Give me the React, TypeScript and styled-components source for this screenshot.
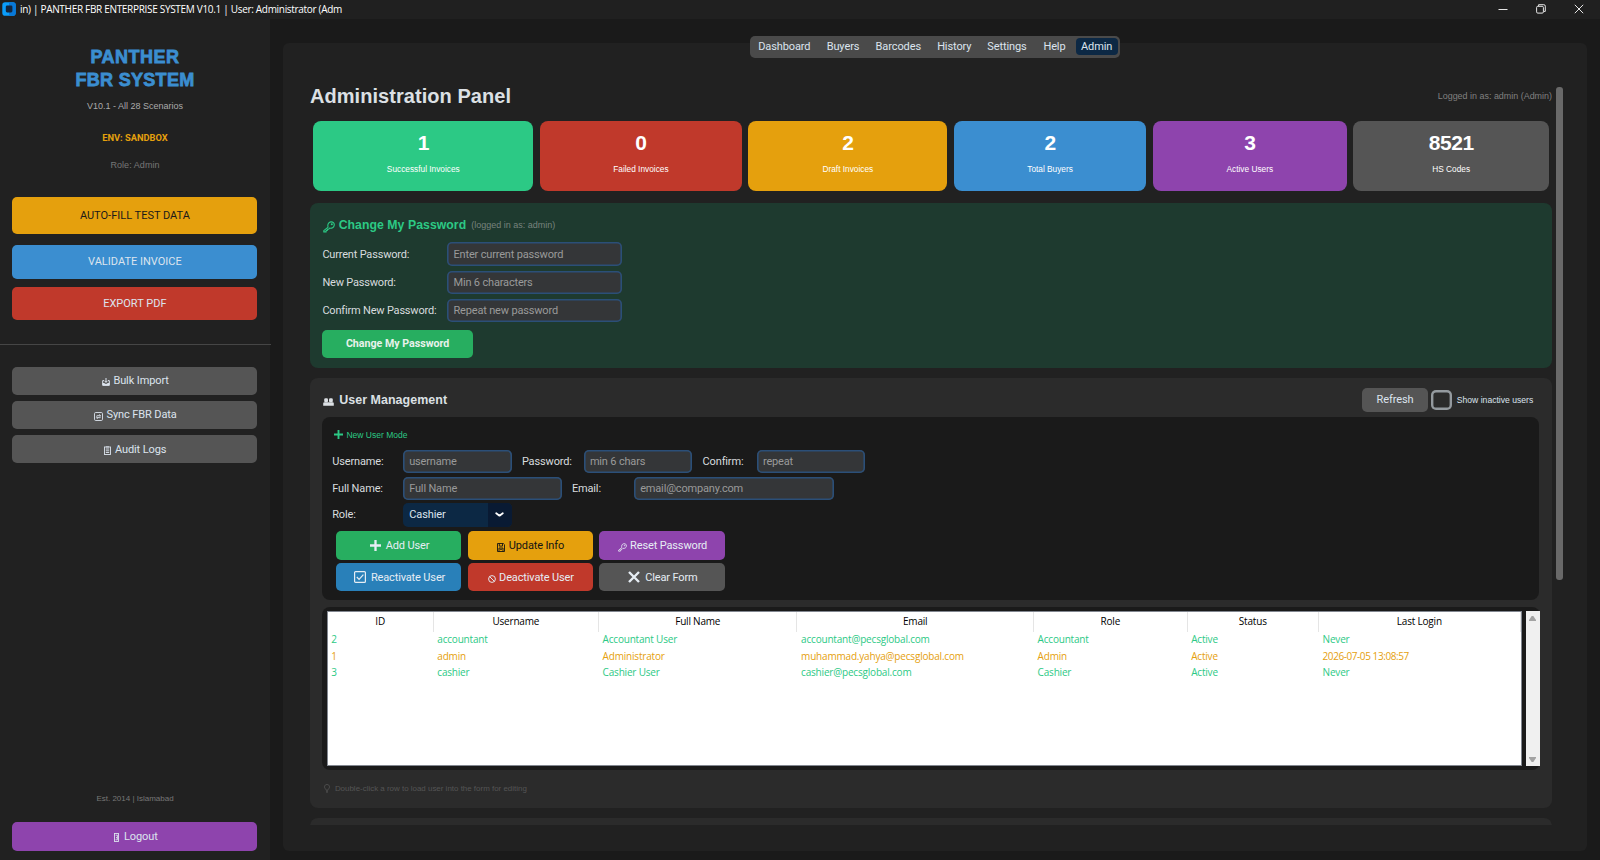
import React, { useState } from "react";
import styled, { createGlobalStyle } from "styled-components";

const ui = `Roboto, "Liberation Sans", sans-serif`;
const arial = `"Liberation Sans", Arial, sans-serif`;
const segoe = `"Open Sans", "Noto Sans", sans-serif`;

const stats = [
  { value: "1", label: "Successful Invoices", color: "#2cc985" },
  { value: "0", label: "Failed Invoices", color: "#c0392b" },
  { value: "2", label: "Draft Invoices", color: "#e5a00d" },
  { value: "2", label: "Total Buyers", color: "#3b8ed0" },
  { value: "3", label: "Active Users", color: "#8e44ad" },
  { value: "8521", label: "HS Codes", color: "#555555" },
];

const tabs = ["Dashboard", "Buyers", "Barcodes", "History", "Settings", "Help", "Admin"];

const columns = ["ID", "Username", "Full Name", "Email", "Role", "Status", "Last Login"];

const users = [
  { id: "2", username: "accountant", name: "Accountant User", email: "accountant@pecsglobal.com", role: "Accountant", status: "Active", last: "Never" },
  { id: "1", username: "admin", name: "Administrator", email: "muhammad.yahya@pecsglobal.com", role: "Admin", status: "Active", last: "2026-07-05 13:08:57" },
  { id: "3", username: "cashier", name: "Cashier User", email: "cashier@pecsglobal.com", role: "Cashier", status: "Active", last: "Never" },
];

// Icons
const KeyIcon = ({ size = 9 }: { size?: number }) => (
  <svg width={size} height={size} viewBox="0 0 12 12" fill="none" stroke="currentColor" strokeWidth="1.1" strokeLinejoin="round">
    <path d="M5.1 6.1C4.3 3.6 5.4 1.3 7.7.9c2.2-.4 3.9 1.3 3.5 3.4-.4 2.2-2.4 3.3-4.6 2.8L5.5 8.3H4.3v1.2H3.1v1.4H.8V9.6z" />
    <circle cx="8.8" cy="3.3" r=".5" />
  </svg>
);

const PlusIcon = ({ size = 11 }: { size?: number }) => (
  <svg width={size} height={size} viewBox="0 0 10 10" stroke="currentColor" strokeWidth="2.1">
    <path d="M5 0v10M0 5h10" />
  </svg>
);

const TrayIcon = () => (
  <svg width="8" height="8" viewBox="0 0 8 8" fill="none" stroke="currentColor" strokeWidth="1">
    <path d="M2 2.600H.7v4.700h6.600V2.600H6M4 0v4.200M2.600 2.800 4 4.400l1.400-1.600" />
    <path d="M.6 4.900h1.800l.6.900h2l.6-.9h1.800v2.500H.6z" fill="currentColor" stroke="none" />
  </svg>
);

const SyncIcon = () => (
  <svg width="9" height="9" viewBox="0 0 9 9" fill="none" stroke="currentColor" strokeWidth=".9">
    <rect x=".5" y=".5" width="8" height="8" rx="1.2" />
    <path d="M6.5 3.700H3.200c-.8 0-.8 1 0 1M2.500 5.600h3.300c.8 0 .8-1 0-1M5.400 2.400l1.200 1.300M3.600 6.900 2.400 5.600" />
  </svg>
);

const ClipboardIcon = () => (
  <svg width="7" height="9" viewBox="0 0 7 9" fill="none" stroke="currentColor" strokeWidth=".9">
    <rect x=".5" y="1" width="6" height="7.5" />
    <path d="M2 .9h3M1.800 3h3.400M1.800 4.800h3.400M1.800 6.500h3.400" />
  </svg>
);

const DoorIcon = () => (
  <svg width="5" height="9" viewBox="0 0 5 9" fill="none" stroke="currentColor" strokeWidth=".9">
    <rect x=".5" y=".5" width="4" height="8" />
    <path d="M1.600 2.200h1.800v4.600H1.600M2.600 4v1.200" />
  </svg>
);

const UsersIcon = () => (
  <svg width="11" height="8" viewBox="0 0 11 8" fill="currentColor">
    <rect x="1.200" y=".3" width="3.800" height="3.900" rx="1.300" />
    <rect x="6" y=".3" width="3.800" height="3.900" rx="1.300" />
    <path d="M.2 7.700V5.600q0-1.300 1.300-1.300h8q1.300 0 1.300 1.300v2.100z" />
  </svg>
);

const DiskIcon = () => (
  <svg width="8" height="9" viewBox="0 0 8 9" fill="none" stroke="currentColor" strokeWidth=".9">
    <path d="M.5.5h5.800l1.200 1.200v6.800h-7zM2.300.6v2.500h3.200V.6M2 8.400V5h4v3.400M2.900 6.300h2.200" />
  </svg>
);

const BanIcon = () => (
  <svg width="8" height="8" viewBox="0 0 8 8" fill="none" stroke="currentColor" strokeWidth=".95">
    <circle cx="4" cy="4" r="3.4" />
    <path d="m1.700 1.700 4.600 4.600" />
  </svg>
);

const CheckBoxIcon = () => (
  <svg width="12" height="12" viewBox="0 0 12 12" fill="none" stroke="currentColor" strokeWidth="1.2">
    <rect x=".6" y=".6" width="10.800" height="10.800" rx="1" />
    <path d="m2.800 6 2.300 2.400 4.300-4.700" />
  </svg>
);

const CrossIcon = () => (
  <svg width="12" height="12" viewBox="0 0 12 12" stroke="currentColor" strokeWidth="2.4">
    <path d="m1 1 10 10M11 1 1 11" />
  </svg>
);

const BulbIcon = () => (
  <svg width="6" height="9" viewBox="0 0 6 9" fill="none" stroke="currentColor" strokeWidth=".8">
    <path d="M2 6.200C2 5 .5 4.500.5 2.900.5 1.400 1.600.5 3 .5s2.500.9 2.500 2.400C5.500 4.500 4 5 4 6.200zM2 7.300h2M2.300 8.400h1.400" />
  </svg>
);

const AppLogo = () => (
  <svg width="14" height="14" viewBox="0 0 14 14">
    <rect x=".3" y=".3" width="13.400" height="13.400" rx="2.800" fill="#0a9dfb" />
    <path d="M7 .3h3.900a2.800 2.800 0 0 1 2.800 2.800v7.800a2.800 2.800 0 0 1-2.800 2.800H7z" fill="#0878d8" />
    <rect x="3.800" y="3.400" width="6.600" height="7" rx="1.400" fill="#12263f" />
  </svg>
);

const App: React.FC = () => {
  const [activeTab, setActiveTab] = useState("Admin");
  const [showInactive, setShowInactive] = useState(false);

  return (
    <Window>
      <GlobalStyle />
      <TitleBar>
        <AppLogo />
        <WindowTitle>in) | PANTHER FBR ENTERPRISE SYSTEM V10.1 | User: Administrator (Adm</WindowTitle>
        <WindowControls>
          <svg width="10" height="10" viewBox="0 0 10 10"><path d="M.5 5.500h9" /></svg>
          <svg width="10" height="10" viewBox="0 0 10 10">
            <rect x=".6" y="2.300" width="6.800" height="6.800" rx="1.200" />
            <path d="M2.600 2V.7h5.200q1.500 0 1.500 1.500v5.200H7.800" />
          </svg>
          <svg width="10" height="10" viewBox="0 0 10 10"><path d="m.8.800 8.400 8.400M9.200.8.800 9.200" /></svg>
        </WindowControls>
      </TitleBar>

      <Body>
        <Sidebar>
          <Brand><BrandTop>PANTHER</BrandTop>FBR SYSTEM</Brand>
          <Version>V10.1 - All 28 Scenarios</Version>
          <Environment>ENV: SANDBOX</Environment>
          <Role>Role: Admin</Role>
          <MainActions>
            <SideButton $bg="#e5a00d" $h={37} $dark>AUTO-FILL TEST DATA</SideButton>
            <SideButton $bg="#3b8ed0" $h={33.5}>VALIDATE INVOICE</SideButton>
            <SideButton $bg="#c0392b" $h={33.5}>EXPORT PDF</SideButton>
          </MainActions>
          <Divider />
          <Tools>
            <SideButton $bg="#555555" $h={28.4}><Glyph><TrayIcon /></Glyph>Bulk Import</SideButton>
            <SideButton $bg="#555555" $h={28.4}><Glyph><SyncIcon /></Glyph>Sync FBR Data</SideButton>
            <SideButton $bg="#555555" $h={28.4}><Glyph><ClipboardIcon /></Glyph>Audit Logs</SideButton>
          </Tools>
          <Established>Est. 2014 | Islamabad</Established>
          <LogoutButton $bg="#8e44ad" $h={28.4}><Glyph $wide><DoorIcon /></Glyph>Logout</LogoutButton>
        </Sidebar>

        <Main>
          <Tabs>
            {tabs.map((tab) => (
              <Tab key={tab} $active={tab === activeTab} onClick={() => setActiveTab(tab)}>{tab}</Tab>
            ))}
          </Tabs>

          <Panel>
            <Scroller>
              <Header>
                <PageTitle>Administration Panel</PageTitle>
                <LoggedIn>Logged in as: admin (Admin)</LoggedIn>
              </Header>

              <Stats>
                {stats.map((s) => (
                  <StatCard key={s.label} $bg={s.color}>
                    <StatValue>{s.value}</StatValue>
                    <StatLabel>{s.label}</StatLabel>
                  </StatCard>
                ))}
              </Stats>

              <PasswordCard>
                <CardHeading $green>
                  <HeadingIcon><KeyIcon size={12} /></HeadingIcon>
                  Change My Password
                  <HeadingNote>(logged in as: admin)</HeadingNote>
                </CardHeading>
                <PasswordGrid>
                  <Label>Current Password:</Label>
                  <Input type="password" placeholder="Enter current password" />
                  <Label>New Password:</Label>
                  <Input type="password" placeholder="Min 6 characters" />
                  <Label>Confirm New Password:</Label>
                  <Input type="password" placeholder="Repeat new password" />
                </PasswordGrid>
                <ChangeButton>Change My Password</ChangeButton>
              </PasswordCard>

              <UserCard>
                <UserHeader>
                  <CardHeading>
                    <HeadingIcon $wide><UsersIcon /></HeadingIcon>
                    User Management
                  </CardHeading>
                  <RefreshButton>Refresh</RefreshButton>
                  <CheckBox
                    aria-label="Show inactive users"
                    $on={showInactive}
                    onClick={() => setShowInactive((prev) => !prev)}
                  />
                  <CheckLabel>Show inactive users</CheckLabel>
                </UserHeader>

                <FormCard>
                  <FormMode><PlusIcon size={9} />New User Mode</FormMode>
                  <FormRow>
                    <FormLabel $w={71}>Username:</FormLabel>
                    <Input $w={108.4} placeholder="username" />
                    <FormLabel $w={62} $gap>Password:</FormLabel>
                    <Input $w={108.4} type="password" placeholder="min 6 chars" />
                    <FormLabel $w={54.4} $gap>Confirm:</FormLabel>
                    <Input $w={108.4} type="password" placeholder="repeat" />
                  </FormRow>
                  <FormRow>
                    <FormLabel $w={71}>Full Name:</FormLabel>
                    <Input $w={158.4} placeholder="Full Name" />
                    <FormLabel $w={62.3} $gap>Email:</FormLabel>
                    <Input $w={200} placeholder="email@company.com" />
                  </FormRow>
                  <FormRow>
                    <FormLabel $w={71}>Role:</FormLabel>
                    <Select>
                      <SelectValue>Cashier</SelectValue>
                      <SelectArrow>
                        <svg width="9" height="5" viewBox="0 0 9 5" fill="none" stroke="currentColor" strokeWidth="1.8" strokeLinecap="round" strokeLinejoin="round">
                          <path d="m1.200 1.200 3.300 2.500 3.300-2.500" />
                        </svg>
                      </SelectArrow>
                    </Select>
                  </FormRow>
                  <Actions>
                    <ActionButton $bg="#27ae60"><Glyph $level $wide><PlusIcon /></Glyph>Add User</ActionButton>
                    <ActionButton $bg="#e5a00d" $dark><Glyph><DiskIcon /></Glyph>Update Info</ActionButton>
                    <ActionButton $bg="#8e44ad"><Glyph><KeyIcon /></Glyph>Reset Password</ActionButton>
                    <ActionButton $bg="#2980b9"><Glyph $level $wide><CheckBoxIcon /></Glyph>Reactivate User</ActionButton>
                    <ActionButton $bg="#c0392b"><Glyph><BanIcon /></Glyph>Deactivate User</ActionButton>
                    <ActionButton $bg="#555555"><Glyph $level $wide><CrossIcon /></Glyph>Clear Form</ActionButton>
                  </Actions>
                </FormCard>

                <TableFrame>
                  <Table>
                    <TableHead>
                      {columns.map((c) => <HeadCell key={c}>{c}</HeadCell>)}
                    </TableHead>
                    {users.map((u) => (
                      <TableRow key={u.id} $admin={u.role === "Admin"}>
                        <Cell>{u.id}</Cell>
                        <Cell>{u.username}</Cell>
                        <Cell>{u.name}</Cell>
                        <Cell>{u.email}</Cell>
                        <Cell>{u.role}</Cell>
                        <Cell>{u.status}</Cell>
                        <Cell $date={u.last !== "Never"}>{u.last}</Cell>
                      </TableRow>
                    ))}
                  </Table>
                  <TableScroll>
                    <svg width="7" height="5" viewBox="0 0 7 5"><path d="M2.700 0h1.600L7 4v1H0V4z" /></svg>
                    <svg width="7" height="5" viewBox="0 0 7 5"><path d="M2.700 5h1.600L7 1V0H0v1z" /></svg>
                  </TableScroll>
                </TableFrame>
                <Hint><BulbIcon />Double-click a row to load user into the form for editing</Hint>
              </UserCard>

              <NextCard />
            </Scroller>
            <ScrollTrack><ScrollThumb /></ScrollTrack>
          </Panel>
        </Main>
      </Body>
    </Window>
  );
};

const GlobalStyle = createGlobalStyle`
  * {
    margin: 0;
    padding: 0;
    box-sizing: border-box;
  }

  body {
    background: #1a1a1a;
    overflow: hidden;
  }

  button, input {
    border: none;
    outline: none;
    font: inherit;
    letter-spacing: inherit;
    color: inherit;
  }

  svg {
    display: block;
    flex: none;
  }
`;

const Window = styled.div`
  display: flex;
  flex-direction: column;
  width: 1600px;
  height: 860px;
  background: #1a1a1a;
  color: #dce4ee;
  font-family: ${ui};
  font-size: 11px;
  letter-spacing: -0.1px;
  white-space: nowrap;
`;

const TitleBar = styled.header`
  display: flex;
  align-items: center;
  flex: none;
  height: 19px;
  padding: 0 16px 1px 1.5px;
  background: #202020;
  color: #ffffff;
`;

const WindowTitle = styled.span`
  flex: 1;
  margin-left: 4.5px;
  font-family: ${segoe};
  font-size: 10px;
  letter-spacing: -0.31px;
`;

const WindowControls = styled.div`
  display: flex;
  gap: 28px;
  padding-bottom: 1px;

  svg {
    fill: none;
    stroke: #e6e6e6;
    stroke-width: 1;
  }
`;

const Body = styled.div`
  display: flex;
  flex: 1;
  min-height: 0;
`;

const Sidebar = styled.aside`
  display: flex;
  flex-direction: column;
  width: 270px;
  padding: 26.5px 0 9.5px;
  background: #212121;
  text-align: center;
`;

const Brand = styled.h1`
  color: #3b8ed0;
  font-family: ${arial};
  font-size: 18px;
  font-weight: 700;
  line-height: 23.5px;
  letter-spacing: 0.3px;
  -webkit-text-stroke: 0.8px #3b8ed0;
`;

const BrandTop = styled.span`
  display: block;
  letter-spacing: 0.5px;
`;

const Version = styled.p`
  margin-top: 6.5px;
  color: #aaaaaa;
  font-family: ${arial};
  font-size: 9px;
  line-height: 14px;
  letter-spacing: 0;
`;

const Environment = styled.p`
  margin-top: 18px;
  color: #e5a00d;
  font-size: 9.3px;
  font-weight: 700;
  line-height: 14px;
  letter-spacing: 0;
`;

const Role = styled.p`
  margin-top: 13px;
  color: #777777;
  font-family: ${arial};
  font-size: 9px;
  line-height: 14px;
  letter-spacing: 0.05px;
`;

const SideButton = styled.button<{ $bg: string; $h: number; $dark?: boolean }>`
  display: flex;
  align-items: center;
  justify-content: center;
  flex: none;
  width: 245px;
  height: ${({ $h }) => $h}px;
  border-radius: 5px;
  background: ${({ $bg }) => $bg};
  color: ${({ $dark }) => ($dark ? "#1a1a1a" : "#dce4ee")};
  cursor: pointer;
`;

const MainActions = styled.div`
  display: grid;
  grid-template-rows: 40.5px 33.5px 33.5px;
  row-gap: 8px;
  margin: 24.5px 12.4px 0;
  letter-spacing: 0;
`;

const Divider = styled.hr`
  flex: none;
  width: 271px;
  height: 1px;
  margin-top: 24px;
  border: none;
  background: #464646;
`;

const Tools = styled.div`
  display: flex;
  flex-direction: column;
  gap: 5.9px;
  margin: 21.5px 12.4px 0;
`;

const Established = styled.p`
  margin: auto 0 16.5px;
  color: #777777;
  font-family: ${arial};
  font-size: 8px;
  line-height: 14px;
  letter-spacing: 0;
`;

const LogoutButton = styled(SideButton)`
  margin: 0 12.4px;
`;

const Glyph = styled.span<{ $level?: boolean; $wide?: boolean }>`
  margin-left: ${({ $wide }) => ($wide ? 2 : 1)}px;
  margin-right: ${({ $wide }) => ($wide ? 5 : 3.5)}px;
  padding-top: ${({ $level }) => ($level ? 0 : 3)}px;
`;

const Main = styled.main`
  display: flex;
  flex-direction: column;
  flex: 1;
  min-width: 0;
  padding: 17px 13px 9px;
`;

const Tabs = styled.nav`
  display: grid;
  grid-template-columns: 66px 51.4px 59.2px 52.8px 52.6px 42.4px 42px;
  align-items: center;
  align-self: center;
  z-index: 1;
  width: 370px;
  height: 21.7px;
  padding: 0 2px 1px 1.3px;
  border-radius: 5px;
  background: #4a4a4a;
`;

const Tab = styled.button<{ $active: boolean }>`
  height: 17px;
  border-radius: 4px;
  background: ${({ $active }) => ($active ? "#0c2844" : "transparent")};
  cursor: pointer;
`;

const Panel = styled.section`
  display: flex;
  flex: 1;
  gap: 4px;
  min-height: 0;
  margin-top: -15.1px;
  padding: 41.4px 24px 26.3px 27px;
  border-radius: 6px;
  background: #212121;
`;

const Scroller = styled.div`
  display: flex;
  flex-direction: column;
  width: 1242px;
  overflow: hidden;
`;

const Header = styled.div`
  display: flex;
  align-items: center;
  justify-content: space-between;
  flex: none;
  height: 25px;
  font-family: ${arial};
`;

const PageTitle = styled.h2`
  color: #dce0e4;
  font-size: 20px;
  line-height: 25px;
  letter-spacing: 0.05px;
`;

const LoggedIn = styled.span`
  padding-bottom: 1.5px;
  color: #808080;
  font-size: 8.95px;
  letter-spacing: 0;
`;

const Stats = styled.div`
  display: grid;
  grid-template-columns: 220px 201.6px 198.7px 192.2px 193.7px 195.5px;
  gap: 6.8px;
  flex: none;
  margin: 12px 3px 0 3.3px;
`;

const StatCard = styled.div<{ $bg: string }>`
  height: 69.7px;
  padding-top: 10px;
  border-radius: 8px;
  background: ${({ $bg }) => $bg};
  color: #ffffff;
  font-family: ${arial};
  text-align: center;
  letter-spacing: 0;
`;

const StatValue = styled.div`
  font-size: 21px;
  font-weight: 700;
  line-height: 24px;
  letter-spacing: -0.4px;
`;

const StatLabel = styled.div`
  margin-top: 8px;
  font-size: 8.3px;
  line-height: 12px;
`;

const PasswordCard = styled.div`
  flex: none;
  height: 164.7px;
  margin-top: 12.6px;
  padding: 12.7px 12.4px;
  border-radius: 8px;
  background: #1e3a2f;
`;

const CardHeading = styled.h3<{ $green?: boolean }>`
  display: flex;
  align-items: center;
  height: 18px;
  color: ${({ $green }) => ($green ? "#2cc985" : "#dce0e4")};
  font-family: ${arial};
  font-size: ${({ $green }) => ($green ? 12.25 : 12.45)}px;
  letter-spacing: 0.05px;
`;

const HeadingIcon = styled.span<{ $wide?: boolean }>`
  width: ${({ $wide }) => ($wide ? 16.8 : 16.3)}px;
  padding: 4px 0 0 1px;
`;

const HeadingNote = styled.span`
  margin-left: 5px;
  color: #77827d;
  font-size: 9px;
  font-weight: 400;
  letter-spacing: 0;
`;

const PasswordGrid = styled.div`
  display: grid;
  grid-template-columns: 112.7px 175px;
  column-gap: 12.4px;
  row-gap: 5px;
  align-items: center;
  margin-top: 8.5px;
`;

const Label = styled.label`
  color: #d8dcdf;
  letter-spacing: -0.19px;
`;

const Input = styled.input<{ $w?: number }>`
  flex: none;
  width: ${({ $w }) => ($w ? `${$w}px` : "100%")};
  height: 23.3px;
  padding: 0 6px;
  border-radius: 5px;
  background: #343638;
  box-shadow: inset 0 0 0 1.6px #2b4f78;
  letter-spacing: -0.17px;

  &::placeholder {
    color: #9a9a9a;
    opacity: 1;
  }
`;

const ChangeButton = styled.button`
  width: 150.4px;
  height: 28.5px;
  margin-top: 7.4px;
  border-radius: 5px;
  background: #27ae60;
  color: #e8f2ec;
  font-size: 10.65px;
  font-weight: 700;
  letter-spacing: 0;
  cursor: pointer;
`;

const UserCard = styled.div`
  flex: none;
  height: 430.3px;
  margin-top: 10px;
  padding: 10px 12.7px 0 12.4px;
  border-radius: 8px;
  background: #2b2b2b;
`;

const UserHeader = styled.div`
  display: flex;
  align-items: center;
  height: 24px;
  padding-right: 6px;

  h3 {
    flex: 1;
  }
`;

const RefreshButton = styled.button`
  width: 66.7px;
  height: 23.7px;
  border-radius: 5px;
  background: #555555;
  cursor: pointer;
`;

const CheckBox = styled.button<{ $on: boolean }>`
  width: 20.5px;
  height: 20.5px;
  margin: 0 5px 0 3px;
  border-radius: 5px;
  background: ${({ $on }) => ($on ? "#1f6aa5" : "transparent")};
  box-shadow: inset 0 0 0 2.4px #949a9f;
`;

const CheckLabel = styled.span`
  width: 76.5px;
  font-family: ${arial};
  font-size: 8.6px;
  letter-spacing: 0;
`;

const FormCard = styled.div`
  height: 183px;
  margin-top: 5px;
  padding: 11.3px 9.8px 0;
  border-radius: 8px;
  background: #1a1a1a;
`;

const FormMode = styled.div`
  display: flex;
  align-items: center;
  gap: 3.7px;
  height: 13px;
  padding-left: 1.6px;
  margin-bottom: 8.7px;
  color: #2cc985;
  font-family: ${arial};
  font-size: 8.5px;
  letter-spacing: 0;
`;

const FormRow = styled.div`
  display: flex;
  align-items: center;
  height: 23.3px;
  margin-bottom: 3.4px;
`;

const FormLabel = styled(Label)<{ $w: number; $gap?: boolean }>`
  flex: none;
  width: ${({ $w }) => $w}px;
  margin-left: ${({ $gap }) => ($gap ? 10.3 : 0)}px;
  letter-spacing: -0.14px;
`;

const Select = styled.div`
  display: flex;
  width: 108.4px;
  height: 23.3px;
  border-radius: 5px;
  overflow: hidden;
  background: #0c2844;
`;

const SelectValue = styled.span`
  flex: 1;
  padding-left: 6px;
  line-height: 23px;
`;

const SelectArrow = styled.span`
  display: flex;
  align-items: center;
  justify-content: center;
  width: 23.3px;
  background: #091a33;
  color: #ffffff;
`;

const Actions = styled.div`
  display: grid;
  grid-template-columns: repeat(3, 125.3px);
  gap: 3.2px 6.4px;
  margin: 4.8px 0 0 3.7px;
`;

const ActionButton = styled.button<{ $bg: string; $dark?: boolean }>`
  display: flex;
  align-items: center;
  justify-content: center;
  height: 28.4px;
  border-radius: 5px;
  background: ${({ $bg }) => $bg};
  color: ${({ $dark }) => ($dark ? "#141414" : "#e6edf4")};
  letter-spacing: -0.14px;
  cursor: pointer;
`;

const TableFrame = styled.div`
  display: flex;
  gap: 4px;
  height: 163px;
  margin-top: 7px;
  margin-right: -1px;
  padding: 4px 0 4px 4.3px;
  border-radius: 8px;
  background: #1a1a1a;
`;

const Table = styled.div`
  width: 1195px;
  border: 1px solid #828790;
  background: #ffffff;
  font-family: ${segoe};
  font-size: 10px;
`;

const TableHead = styled.div`
  display: grid;
  grid-template-columns: 106px 165.3px 198.5px 236.5px 153.6px 131.4px 1fr;
  height: 20px;
  color: #000000;
  letter-spacing: -0.2px;
`;

const HeadCell = styled.div`
  border-right: 1px solid #e5e5e5;
  line-height: 19px;
  text-align: center;
`;

const TableRow = styled(TableHead)<{ $admin: boolean }>`
  height: 16.6px;
  color: ${({ $admin }) => ($admin ? "#e5a00d" : "#2cc985")};
  letter-spacing: -0.19px;
`;

const Cell = styled.div<{ $date?: boolean }>`
  padding-left: 3.6px;
  line-height: 15px;
  letter-spacing: ${({ $date }) => ($date ? "-0.43px" : "inherit")};
`;

const TableScroll = styled.div`
  display: flex;
  flex-direction: column;
  align-items: center;
  justify-content: space-between;
  width: 14px;
  padding: 5px 0 4px;
  background: #f0f0f0;

  svg {
    fill: #a3a3a3;
  }
`;

const Hint = styled.div`
  display: flex;
  align-items: center;
  gap: 4.5px;
  height: 12px;
  margin: 12.4px 0 0 2px;
  color: #555555;
  font-family: ${arial};
  font-size: 7.95px;
  letter-spacing: 0;
`;

const NextCard = styled.div`
  flex: none;
  height: 60px;
  margin-top: 10px;
  border-radius: 8px;
  background: #2b2b2b;
`;

const ScrollTrack = styled.div`
  width: 6.7px;
  padding-top: 3.3px;
`;

const ScrollThumb = styled.div`
  height: 493px;
  border-radius: 3px;
  background: #696969;
`;

export default App;
